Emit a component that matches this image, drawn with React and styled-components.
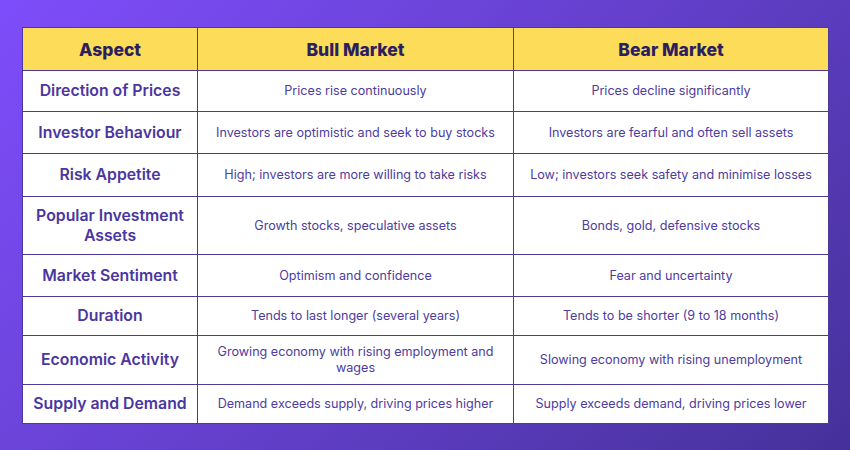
import React from "react";
import styled, { createGlobalStyle } from "styled-components";

const GlobalStyle = createGlobalStyle`
  html, body {
    margin: 0;
    padding: 0;
  }
  body {
    font-family: Inter, "Open Sans", "Liberation Sans", sans-serif;
  }
`;

const rows = [
  { aspect: "Direction of Prices", bull: "Prices rise continuously", bear: "Prices decline significantly", h: 41 },
  { aspect: "Investor Behaviour", bull: "Investors are optimistic and seek to buy stocks", bear: "Investors are fearful and often sell assets", h: 42 },
  { aspect: "Risk Appetite", bull: "High; investors are more willing to take risks", bear: "Low; investors seek safety and minimise losses", h: 43 },
  { aspect: "Popular Investment Assets", bull: "Growth stocks, speculative assets", bear: "Bonds, gold, defensive stocks", h: 58 },
  { aspect: "Market Sentiment", bull: "Optimism and confidence", bear: "Fear and uncertainty", h: 42 },
  { aspect: "Duration", bull: "Tends to last longer (several years)", bear: "Tends to be shorter (9 to 18 months)", h: 39 },
  { aspect: "Economic Activity", bull: "Growing economy with rising employment and wages", bear: "Slowing economy with rising unemployment", h: 49 },
  { aspect: "Supply and Demand", bull: "Demand exceeds supply, driving prices higher", bear: "Supply exceeds demand, driving prices lower", h: 39 },
];

const Page = styled.div`
  width: 850px;
  height: 450px;
  box-sizing: border-box;
  padding: 27px 22px 0 22px;
  background: linear-gradient(135deg, #7e4dfb 0%, #6440cc 50%, #45319a 100%);
  overflow: hidden;
`;

const Table = styled.table`
  width: 806px;
  border-collapse: collapse;
  table-layout: fixed;
  background: #ffffff;
`;

const HeadCell = styled.th`
  height: 42px;
  padding: 0;
  background: #fddc5a;
  color: #2b1f5e;
  font-size: 17.5px;
  font-weight: 800;
  text-align: center;
  border: 1px solid #4b3a9a;
`;

const Row = styled.tr`
  height: ${(p) => p.$h}px;
`;

const LabelCell = styled.td`
  padding: 0 4px;
  color: #4a36a0;
  font-size: 15.8px;
  font-weight: 600;
  line-height: 20px;
  text-align: center;
  border: 1px solid #4b3a9a;
`;

const Cell = styled.td`
  padding: 0 12px;
  color: #4d3ca0;
  font-size: 12.6px;
  font-weight: 400;
  line-height: 16px;
  text-align: center;
  border: 1px solid #4b3a9a;
`;

export default function App() {
  return (
    <Page>
      <GlobalStyle />
      <Table>
        <colgroup>
          <col style={{ width: 175 }} />
          <col style={{ width: 316 }} />
          <col style={{ width: 315 }} />
        </colgroup>
        <thead>
          <tr>
            <HeadCell>Aspect</HeadCell>
            <HeadCell>Bull Market</HeadCell>
            <HeadCell>Bear Market</HeadCell>
          </tr>
        </thead>
        <tbody>
          {rows.map((r) => (
            <Row key={r.aspect} $h={r.h}>
              <LabelCell>{r.aspect}</LabelCell>
              <Cell>{r.bull}</Cell>
              <Cell>{r.bear}</Cell>
            </Row>
          ))}
        </tbody>
      </Table>
    </Page>
  );
}
